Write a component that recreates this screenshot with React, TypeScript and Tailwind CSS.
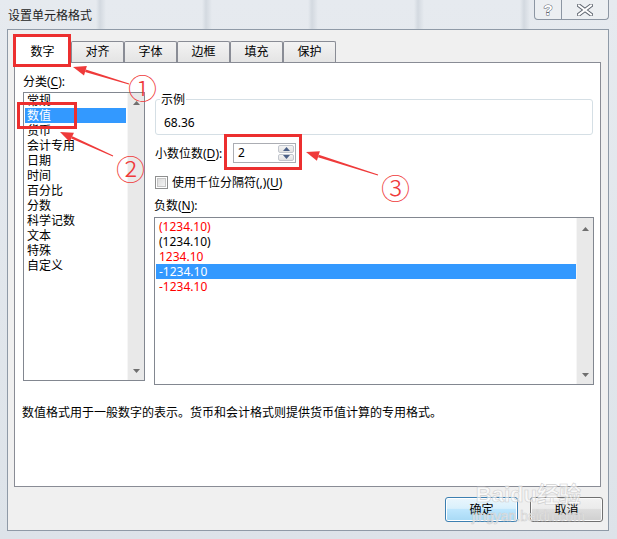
import * as React from "react";

const tabs = ["数字", "对齐", "字体", "边框", "填充", "保护"];

const categories = ["常规", "数值", "货币", "会计专用", "日期", "时间", "百分比", "分数", "科学记数", "文本", "特殊", "自定义"];

const negatives = [
    { text: "(1234.10)", red: true },
    { text: "(1234.10)", red: false },
    { text: "1234.10", red: true },
    { text: "-1234.10", red: false, selected: true },
    { text: "-1234.10", red: true },
];

const Key = ({ k }: { k: string }) => <span className="underline underline-offset-[2px]">{k}</span>;

const Tri = ({ up, color = "#6f6f6f" }: { up?: boolean; color?: string }) => (
    <svg width="7" height="4" viewBox="0 0 7 4">
        <polygon points={up ? "3.5,0 7,4 0,4" : "0,0 7,0 3.5,4"} fill={color} />
    </svg>
);

const ScrollBar = ({ top, bottom }: { top: string; bottom: string }) => (
    <div className={`flex w-[17px] flex-col items-center justify-between border-l border-[#f6f6f6] bg-[#e9e9e9] ${top} ${bottom}`}>
        <Tri up />
        <Tri />
    </div>
);

// red arrow with a tapered shaft, drawn from tail to tip
const Arrow = ({ x1, y1, x2, y2 }: { x1: number; y1: number; x2: number; y2: number }) => {
    const dx = x2 - x1;
    const dy = y2 - y1;
    const len = Math.hypot(dx, dy);
    const ux = dx / len;
    const uy = dy / len;
    const bx = x2 - ux * 13;
    const by = y2 - uy * 13;
    const px = -uy;
    const py = ux;
    return (
        <g fill="#ef3a3a">
            <polygon points={`${x1 + px * 0.5},${y1 + py * 0.5} ${x1 - px * 0.5},${y1 - py * 0.5} ${bx - px * 1.3},${by - py * 1.3} ${bx + px * 1.3},${by + py * 1.3}`} />
            <polygon points={`${x2},${y2} ${bx + px * 5},${by + py * 5} ${bx - px * 5},${by - py * 5}`} />
        </g>
    );
};

const Circled = ({ ch, pos }: { ch: string; pos: string }) => (
    <span className={`absolute ${pos} font-[family-name:'Noto_Sans_CJK_SC',sans-serif] text-[29px] leading-[29px] font-light text-[#ef3a3a]`}>{ch}</span>
);

const App: React.FC = () => {
    return (
        <div className="relative h-[539px] w-[617px] overflow-hidden bg-[linear-gradient(180deg,#e6eaef_0%,#dde3e9_100%)] font-[family-name:'Noto_Sans','Noto_Sans_CJK_SC',sans-serif] text-[12px] text-black">
            {/* title bar */}
            <div className="flex h-[29px] items-start justify-between bg-[repeating-linear-gradient(90deg,transparent_0px,transparent_96px,#d3d9e0_100px,transparent_106px)]">
                <span className="pl-[8px] pt-[9px] text-[12px] leading-[14px] text-[#1e1e1e]">设置单元格格式</span>
                <div className="mr-[8px] flex h-[20px] rounded-b-[4px] border border-t-0 border-[#8c96a3] bg-[#eef1f4]/70">
                    <div className="flex w-[27px] items-center justify-center border-r border-[#8c96a3]">
                        <svg width="12" height="16" viewBox="0 0 12 16">
                            <text x="6" y="13" textAnchor="middle" fontSize="15" fontWeight="700" fontFamily="Liberation Sans, sans-serif" fill="#ffffff" stroke="#5f6670" strokeWidth="1" paintOrder="stroke">?</text>
                        </svg>
                    </div>
                    <div className="flex w-[46px] items-center justify-center">
                        <svg width="16" height="12" viewBox="0 0 16 12">
                            <path d="M2 1.5 L14 10.5 M14 1.5 L2 10.5" stroke="#5f6670" strokeWidth="4" strokeLinecap="square" />
                            <path d="M2 1.5 L14 10.5 M14 1.5 L2 10.5" stroke="#ffffff" strokeWidth="2" strokeLinecap="square" />
                        </svg>
                    </div>
                </div>
            </div>

            {/* client area */}
            <div className="ml-[7px] h-[502px] w-[602px] border border-[#8f9aa7] bg-[#f0f0f0]">
                {/* tabs */}
                <div className="mt-[6px] flex h-[26px] items-end pl-[6px]">
                    {tabs.map((t, i) =>
                        i === 0 ? (
                            <div key={t} className="relative z-10 -mb-px flex h-[27px] w-[57px] items-center justify-center border border-b-0 border-[#898c95] bg-white pt-[3px]">
                                {t}
                                <div className="absolute -left-[2px] -top-[3px] h-[33px] w-[58px] border-[3px] border-[#ec2f2f]" />
                            </div>
                        ) : (
                            <div key={t} className="flex h-[21px] w-[53px] items-center justify-center rounded-t-[2px] border border-b-0 border-[#898c95] bg-[linear-gradient(180deg,#f3f3f3,#e4e4e4)]">
                                {t}
                            </div>
                        )
                    )}
                </div>

                {/* tab panel */}
                <div className="ml-[6px] h-[425px] w-[587px] border border-[#898c95] bg-white">
                    <div className="flex pl-[8px] pt-[11px]">
                        {/* categories */}
                        <div className="flex w-[122px] flex-col">
                            <div className="h-[15px] leading-[15px]">分类(<Key k="C" />):</div>
                            <div className="relative mt-[3px] flex h-[289px] border border-[#828790] bg-white">
                                <div className="flex-1 px-px">
                                    {categories.map((c, i) => (
                                        <div key={c} className={`h-[15px] pl-[2px] leading-[15px] ${i === 1 ? "bg-[#3399ff] text-white" : ""}`}>
                                            {c}
                                        </div>
                                    ))}
                                </div>
                                <ScrollBar top="pt-[8px]" bottom="pb-[7px]" />
                                <div className="absolute -left-[7px] top-[9px] h-[27px] w-[60px] border-[3px] border-[#ec2f2f]" />
                            </div>
                        </div>

                        {/* right side */}
                        <div className="ml-[9px] flex w-[440px] flex-col pt-[18px]">
                            <fieldset className="ml-px w-[438px] rounded-[3px] border border-[#d5dfe5] px-[4px] pb-[4px]">
                                <legend className="px-px leading-[15px]">示例</legend>
                                <div className="pl-[4px] pt-[8px] leading-[15px]">68.36</div>
                            </fieldset>

                            <div className="mt-[8px] flex h-[20px] items-center">
                                <span className="w-[79px] pl-px leading-[15px]">
                                    小数位数(<Key k="D" />):
                                </span>
                                <div className="relative flex h-[20px] w-[63px] border border-[#abadb3] bg-white">
                                    <span className="flex-1 pl-[4px] leading-[18px]">2</span>
                                    <div className="flex w-[18px] flex-col gap-px p-px">
                                        <div className="flex flex-1 items-center justify-center rounded-[2px] border border-[#c3c7ce] bg-[linear-gradient(180deg,#f4f4f4,#e2e2e2)]">
                                            <Tri up color="#4a5f86" />
                                        </div>
                                        <div className="flex flex-1 items-center justify-center rounded-[2px] border border-[#c3c7ce] bg-[linear-gradient(180deg,#f4f4f4,#e2e2e2)]">
                                            <Tri color="#4a5f86" />
                                        </div>
                                    </div>
                                    <div className="absolute -left-[10px] -top-[10px] h-[36px] w-[78px] border-[3px] border-[#ec2f2f]" />
                                </div>
                            </div>

                            <div className="mt-[12px] flex h-[15px] items-center pl-px">
                                <div className="flex h-[13px] w-[13px] items-center justify-center border border-[#8e8f8f] bg-white">
                                    <div className="h-[9px] w-[9px] border border-[#c6c6c6] bg-[linear-gradient(135deg,#dcdcdc,#f4f4f4)]" />
                                </div>
                                <span className="ml-[4px] leading-[15px]">
                                    使用千位分隔符(,)(<Key k="U" />)
                                </span>
                            </div>

                            <div className="mt-[8px] h-[15px] leading-[15px]">
                                负数(<Key k="N" />):
                            </div>
                            <div className="mt-[4px] flex h-[168px] w-[440px] border border-[#828790] bg-white">
                                <div className="flex-1 pl-px pt-px">
                                    {negatives.map((n, i) => (
                                        <div
                                            key={i}
                                            className={`h-[15px] pl-[3px] leading-[15px] ${n.selected ? "bg-[#3399ff] text-white" : n.red ? "text-[#ff0000]" : "text-black"}`}
                                        >
                                            {n.text}
                                        </div>
                                    ))}
                                </div>
                                <ScrollBar top="pt-[9px]" bottom="pb-[7px]" />
                            </div>
                        </div>
                    </div>

                    <div className="mt-[20px] pl-[7px] leading-[15px]">
                        数值格式用于一般数字的表示。货币和会计格式则提供货币值计算的专用格式。
                    </div>
                </div>

                {/* buttons */}
                <div className="mt-[10px] flex justify-end gap-[12px] pr-[5px]">
                    <button className="flex h-[25px] w-[73px] items-center justify-center rounded-[3px] border border-[#3c7fb1] bg-[linear-gradient(180deg,#eaf6fd_0%,#d9f0fc_45%,#bee6fd_50%,#a7d9f5_100%)] shadow-[inset_0_0_0_1px_#ffffff]">
                        确定
                    </button>
                    <button className="flex h-[25px] w-[73px] items-center justify-center rounded-[3px] border border-[#707070] bg-[linear-gradient(180deg,#f2f2f2_0%,#ebebeb_45%,#dddddd_50%,#cfcfcf_100%)] shadow-[inset_0_0_0_1px_#fbfbfb]">
                        取消
                    </button>
                </div>
            </div>

            {/* annotations */}
            <svg className="pointer-events-none absolute left-0 top-0" width="617" height="539">
                <Arrow x1={129} y1={84} x2={73} y2={67} />
                <Arrow x1={113} y1={156} x2={60} y2={132} />
                <Arrow x1={378} y1={175} x2={306} y2={152} />
            </svg>
            <Circled ch="①" pos="left-[128px] top-[73px]" />
            <Circled ch="②" pos="left-[116px] top-[154px]" />
            <Circled ch="③" pos="left-[381px] top-[173px]" />

            {/* watermark */}
            <div className="pointer-events-none absolute left-[472px] top-[484px] flex flex-col items-center leading-none text-white/60 [-webkit-text-stroke:0.6px_#cfcfcf]">
                <span className="font-[family-name:'Liberation_Sans','Noto_Sans_CJK_SC',sans-serif] text-[22px] font-bold">Baidu经验</span>
                <span className="mt-[3px] font-[family-name:'Liberation_Sans',sans-serif] text-[14px]">jingyan.baidu.com</span>
            </div>
        </div>
    );
};

export default App;
